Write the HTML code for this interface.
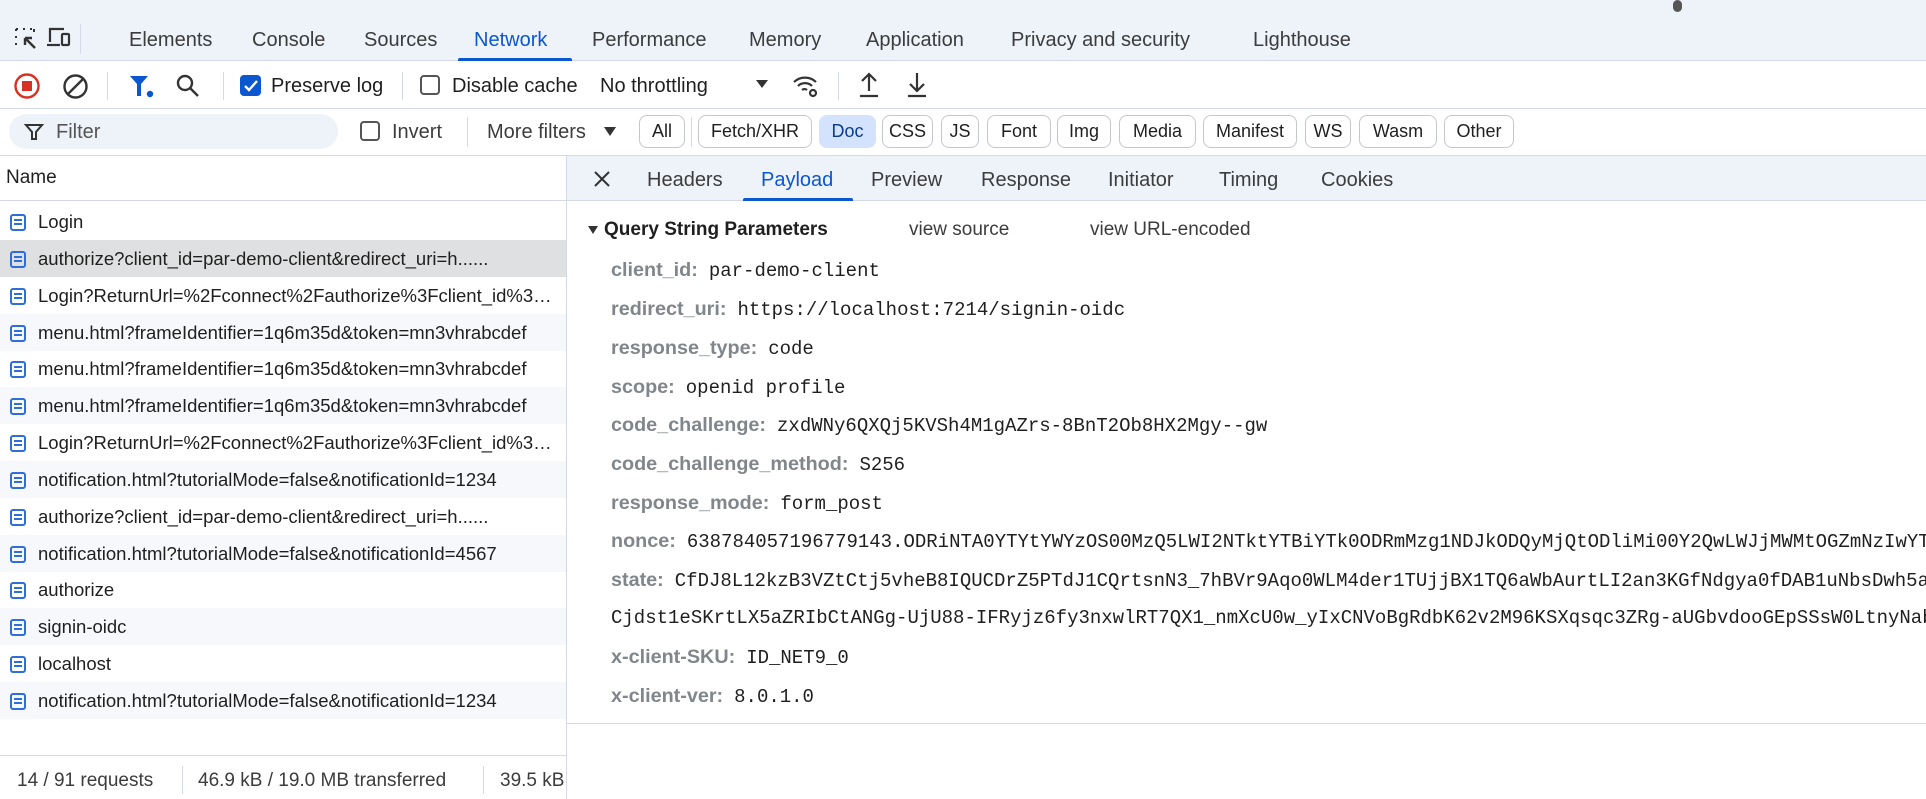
<!DOCTYPE html>
<html><head><meta charset="utf-8"><style>
*{margin:0;padding:0;box-sizing:border-box}
body{width:1926px;height:799px;overflow:hidden;background:#fff;font-family:"Liberation Sans",sans-serif;color:#1f1f1f;position:relative}
.a{position:absolute;white-space:nowrap}
.t{font-size:20px;color:#3c3c3c}
.mono{font-family:"Liberation Mono",monospace;font-size:19px;color:#1f1f1f}
.lbl{font-weight:bold;color:#80868b;font-size:19.8px;margin-right:11px}
.chip{position:absolute;top:115px;height:33px;border:1px solid #c4c7cc;border-radius:8px;font-size:18px;line-height:31px;text-align:center;color:#1f1f1f}
.row{position:absolute;left:0;width:566px;height:37px;font-size:18.5px;line-height:37px;white-space:nowrap}
.row .ic{position:absolute;left:10px;top:11px;width:16px;height:17px;border:2px solid #2f6ed6;border-radius:3px}
.row .ic:before{content:"";position:absolute;left:2px;right:2px;top:3px;height:2px;background:#2f6ed6;box-shadow:0 4px 0 #2f6ed6}
.row span{position:absolute;left:38px;width:524px;overflow:hidden;text-overflow:ellipsis;white-space:nowrap}
.sep{position:absolute;width:1px;background:#d3dae6}
</style></head><body>
<div class="a" style="left:0;top:0;width:1926px;height:61px;background:#eef2f9;border-bottom:1px solid #d3dae6"></div>
<div class="a" style="left:1673px;top:0;width:9px;height:12px;border-radius:5px;background:#555"></div>
<svg class="a" style="left:14px;top:27px" width="26" height="26" viewBox="0 0 26 26" fill="none" stroke="#333" stroke-width="2"><path d="M2 2h3M9 2h3M16 2h3M2 2v3M2 9v3M2 16v3" stroke-dasharray="2 2"/><path d="M20 2v3" /><path d="M11 11l10 10M11 11h7M11 11v7" stroke-width="2.4"/></svg>
<svg class="a" style="left:46px;top:26px" width="26" height="24" viewBox="0 0 26 24" fill="none" stroke="#333" stroke-width="2.2"><path d="M4 16V3h14"/><path d="M1 19h13"/><rect x="16" y="8" width="7" height="11" rx="1"/></svg>
<div class="sep" style="left:80px;top:24px;height:30px"></div>
<div class="a t" style="left:129px;top:29px">Elements</div>
<div class="a t" style="left:252px;top:29px">Console</div>
<div class="a t" style="left:364px;top:29px">Sources</div>
<div class="a t" style="left:474px;top:29px;color:#0b57d0">Network</div>
<div class="a" style="left:458px;top:58px;width:114px;height:3px;background:#0b57d0;border-radius:2px 2px 0 0"></div>
<div class="a t" style="left:592px;top:29px">Performance</div>
<div class="a t" style="left:749px;top:29px">Memory</div>
<div class="a t" style="left:866px;top:29px">Application</div>
<div class="a t" style="left:1011px;top:29px">Privacy and security</div>
<div class="a t" style="left:1253px;top:29px">Lighthouse</div>
<div class="a" style="left:0;top:108px;width:1926px;height:1px;background:#d3dae6"></div>
<svg class="a" style="left:13px;top:72px" width="28" height="28" viewBox="0 0 28 28"><circle cx="14" cy="14" r="11.5" fill="none" stroke="#d93025" stroke-width="2.4"/><rect x="9" y="9" width="10" height="10" fill="#d93025"/></svg>
<svg class="a" style="left:62px;top:73px" width="27" height="27" viewBox="0 0 27 27" fill="none" stroke="#333" stroke-width="2.4"><circle cx="13.5" cy="13.5" r="11"/><path d="M6 21L21 6"/></svg>
<div class="sep" style="left:107px;top:72px;height:28px"></div>
<svg class="a" style="left:128px;top:72px" width="28" height="28" viewBox="0 0 28 28"><path d="M2 4h18l-7 8v12h-4V12z" fill="#0b57d0"/><circle cx="22" cy="22" r="3.2" fill="#0b57d0"/></svg>
<svg class="a" style="left:175px;top:73px" width="26" height="26" viewBox="0 0 26 26" fill="none" stroke="#333" stroke-width="2.4"><circle cx="10" cy="10" r="7"/><path d="M15 15l8 8"/></svg>
<div class="sep" style="left:223px;top:72px;height:28px"></div>
<div class="a" style="left:240px;top:75px;width:21px;height:21px;border-radius:4px;background:#0b57d0"></div>
<svg class="a" style="left:243px;top:78px" width="16" height="16" viewBox="0 0 16 16"><path d="M2 8l4 4 8-9" fill="none" stroke="#fff" stroke-width="2.4"/></svg>
<div class="a" style="left:271px;top:75px;font-size:20px;color:#1f1f1f">Preserve log</div>
<div class="sep" style="left:402px;top:72px;height:28px"></div>
<div class="a" style="left:420px;top:75px;width:20px;height:20px;border-radius:4px;border:2px solid #555"></div>
<div class="a" style="left:452px;top:75px;font-size:20px;color:#1f1f1f">Disable cache</div>
<div class="a" style="left:600px;top:75px;font-size:20px;color:#1f1f1f">No throttling</div>
<div class="a" style="left:756px;top:80px;width:0;height:0;border-left:6px solid transparent;border-right:6px solid transparent;border-top:8px solid #333"></div>
<svg class="a" style="left:792px;top:72px" width="28" height="28" viewBox="0 0 28 28" fill="none" stroke="#333" stroke-width="2.2"><path d="M2 10a16 16 0 0 1 22 0M6 14a10 10 0 0 1 14 0M10 18a4 4 0 0 1 5 0"/><circle cx="21" cy="21" r="3"/></svg>
<div class="sep" style="left:838px;top:72px;height:28px"></div>
<svg class="a" style="left:857px;top:71px" width="24" height="28" viewBox="0 0 24 28" fill="none" stroke="#333" stroke-width="2.2"><path d="M12 20V3M5 10l7-7 7 7M3 25h18"/></svg>
<svg class="a" style="left:905px;top:71px" width="24" height="28" viewBox="0 0 24 28" fill="none" stroke="#333" stroke-width="2.2"><path d="M12 2v18M5 13l7 7 7-7M3 25h18"/></svg>
<div class="a" style="left:0;top:155px;width:1926px;height:1px;background:#d3dae6"></div>
<div class="a" style="left:9px;top:114px;width:329px;height:35px;border-radius:18px;background:#eef2f9"></div>
<svg class="a" style="left:24px;top:122px" width="20" height="20" viewBox="0 0 20 20" fill="none" stroke="#333" stroke-width="2"><path d="M2 3h16l-6 7v7h-4v-7z"/></svg>
<div class="a" style="left:56px;top:121px;font-size:20px;color:#555">Filter</div>
<div class="a" style="left:360px;top:121px;width:20px;height:20px;border-radius:4px;border:2px solid #555"></div>
<div class="a" style="left:392px;top:121px;font-size:20px;color:#3c3c3c">Invert</div>
<div class="sep" style="left:467px;top:117px;height:30px"></div>
<div class="a" style="left:487px;top:121px;font-size:20px;color:#3c3c3c">More filters</div>
<div class="a" style="left:604px;top:127px;width:0;height:0;border-left:6px solid transparent;border-right:6px solid transparent;border-top:9px solid #333"></div>
<div class="chip" style="left:639px;width:46px">All</div>
<div class="sep" style="left:691px;top:117px;height:30px"></div>
<div class="chip" style="left:698px;width:114px">Fetch/XHR</div>
<div class="chip" style="left:819px;width:57px;background:#d3e3fd;border-color:#d3e3fd;color:#0b3c8c">Doc</div>
<div class="chip" style="left:882px;width:51px">CSS</div>
<div class="chip" style="left:941px;width:38px">JS</div>
<div class="chip" style="left:987px;width:64px">Font</div>
<div class="chip" style="left:1057px;width:54px">Img</div>
<div class="chip" style="left:1119px;width:77px">Media</div>
<div class="chip" style="left:1203px;width:94px">Manifest</div>
<div class="chip" style="left:1305px;width:46px">WS</div>
<div class="chip" style="left:1359px;width:78px">Wasm</div>
<div class="chip" style="left:1444px;width:70px">Other</div>
<div class="a" style="left:566px;top:155px;width:1px;height:644px;background:#d3dae6"></div>
<div class="a" style="left:6px;top:167px;font-size:19px;color:#1f1f1f">Name</div>
<div class="a" style="left:0;top:200px;width:566px;height:1px;background:#d3dae6"></div>
<div class="row" style="top:203px"><i class="ic"></i><span>Login</span></div>
<div class="row" style="top:240px;background:#dfe0e1"><i class="ic"></i><span>authorize?client_id=par-demo-client&amp;redirect_uri=h......</span></div>
<div class="row" style="top:277px"><i class="ic"></i><span>Login?ReturnUrl=%2Fconnect%2Fauthorize%3Fclient_id%3Dpar</span></div>
<div class="row" style="top:314px;background:#f6f8fc"><i class="ic"></i><span>menu.html?frameIdentifier=1q6m35d&amp;token=mn3vhrabcdef</span></div>
<div class="row" style="top:350px"><i class="ic"></i><span>menu.html?frameIdentifier=1q6m35d&amp;token=mn3vhrabcdef</span></div>
<div class="row" style="top:387px;background:#f6f8fc"><i class="ic"></i><span>menu.html?frameIdentifier=1q6m35d&amp;token=mn3vhrabcdef</span></div>
<div class="row" style="top:424px"><i class="ic"></i><span>Login?ReturnUrl=%2Fconnect%2Fauthorize%3Fclient_id%3Dpar</span></div>
<div class="row" style="top:461px;background:#f6f8fc"><i class="ic"></i><span>notification.html?tutorialMode=false&amp;notificationId=1234</span></div>
<div class="row" style="top:498px"><i class="ic"></i><span>authorize?client_id=par-demo-client&amp;redirect_uri=h......</span></div>
<div class="row" style="top:535px;background:#f6f8fc"><i class="ic"></i><span>notification.html?tutorialMode=false&amp;notificationId=4567</span></div>
<div class="row" style="top:571px"><i class="ic"></i><span>authorize</span></div>
<div class="row" style="top:608px;background:#f6f8fc"><i class="ic"></i><span>signin-oidc</span></div>
<div class="row" style="top:645px"><i class="ic"></i><span>localhost</span></div>
<div class="row" style="top:682px;background:#f6f8fc"><i class="ic"></i><span>notification.html?tutorialMode=false&amp;notificationId=1234</span></div>
<div class="a" style="left:0;top:755px;width:566px;height:1px;background:#d3dae6"></div>
<div class="a" style="left:17px;top:770px;font-size:19px;color:#3c3c3c">14 / 91 requests</div>
<div class="sep" style="left:182px;top:766px;height:28px"></div>
<div class="a" style="left:198px;top:770px;font-size:19px;color:#3c3c3c">46.9 kB / 19.0 MB transferred</div>
<div class="sep" style="left:483px;top:766px;height:28px"></div>
<div class="a" style="left:500px;top:770px;font-size:19px;color:#3c3c3c;width:66px;overflow:hidden">39.5 kB</div>
<div class="a" style="left:567px;top:156px;width:1359px;height:45px;background:#eef2f9;border-bottom:1px solid #d3dae6"></div>
<svg class="a" style="left:592px;top:169px" width="20" height="20" viewBox="0 0 20 20" stroke="#333" stroke-width="2"><path d="M3 3l14 14M17 3L3 17"/></svg>
<div class="a t" style="left:647px;top:169px">Headers</div>
<div class="a t" style="left:761px;top:169px;color:#0b57d0">Payload</div>
<div class="a" style="left:743px;top:198px;width:110px;height:3px;background:#0b57d0;border-radius:2px 2px 0 0"></div>
<div class="a t" style="left:871px;top:169px">Preview</div>
<div class="a t" style="left:981px;top:169px">Response</div>
<div class="a t" style="left:1108px;top:169px">Initiator</div>
<div class="a t" style="left:1219px;top:169px">Timing</div>
<div class="a t" style="left:1321px;top:169px">Cookies</div>
<div class="a" style="left:588px;top:226px;width:0;height:0;border-left:5px solid transparent;border-right:5px solid transparent;border-top:8px solid #333"></div>
<div class="a" style="left:604px;top:219px;font-size:19px;font-weight:bold;color:#1f1f1f">Query String Parameters</div>
<div class="a" style="left:909px;top:219px;font-size:19px;color:#3c3c3c">view source</div>
<div class="a" style="left:1090px;top:219px;font-size:19px;color:#3c3c3c">view URL-encoded</div>
<div class="a" style="left:611px;top:259px"><span class="lbl">client_id:</span><span class="mono">par-demo-client</span></div>
<div class="a" style="left:611px;top:298px"><span class="lbl">redirect_uri:</span><span class="mono">https://localhost:7214/signin-oidc</span></div>
<div class="a" style="left:611px;top:337px"><span class="lbl">response_type:</span><span class="mono">code</span></div>
<div class="a" style="left:611px;top:376px"><span class="lbl">scope:</span><span class="mono">openid profile</span></div>
<div class="a" style="left:611px;top:414px"><span class="lbl">code_challenge:</span><span class="mono">zxdWNy6QXQj5KVSh4M1gAZrs-8BnT2Ob8HX2Mgy--gw</span></div>
<div class="a" style="left:611px;top:453px"><span class="lbl">code_challenge_method:</span><span class="mono">S256</span></div>
<div class="a" style="left:611px;top:492px"><span class="lbl">response_mode:</span><span class="mono">form_post</span></div>
<div class="a" style="left:611px;top:530px"><span class="lbl">nonce:</span><span class="mono">638784057196779143.ODRiNTA0YTYtYWYzOS00MzQ5LWI2NTktYTBiYTk0ODRmMzg1NDJkODQyMjQtODliMi00Y2QwLWJjMWMtOGZmNzIwYTk</span></div>
<div class="a" style="left:611px;top:569px"><span class="lbl">state:</span><span class="mono">CfDJ8L12kzB3VZtCtj5vheB8IQUCDrZ5PTdJ1CQrtsnN3_7hBVr9Aqo0WLM4der1TUjjBX1TQ6aWbAurtLI2an3KGfNdgya0fDAB1uNbsDwh5abc</span></div>
<div class="a mono" style="left:611px;top:607px">Cjdst1eSKrtLX5aZRIbCtANGg-UjU88-IFRyjz6fy3nxwlRT7QX1_nmXcU0w_yIxCNVoBgRdbK62v2M96KSXqsqc3ZRg-aUGbvdooGEpSSsW0LtnyNabc</div>
<div class="a" style="left:611px;top:646px"><span class="lbl">x-client-SKU:</span><span class="mono">ID_NET9_0</span></div>
<div class="a" style="left:611px;top:685px"><span class="lbl">x-client-ver:</span><span class="mono">8.0.1.0</span></div>
<div class="a" style="left:567px;top:723px;width:1359px;height:1px;background:#d3dae6"></div>
</body></html>
